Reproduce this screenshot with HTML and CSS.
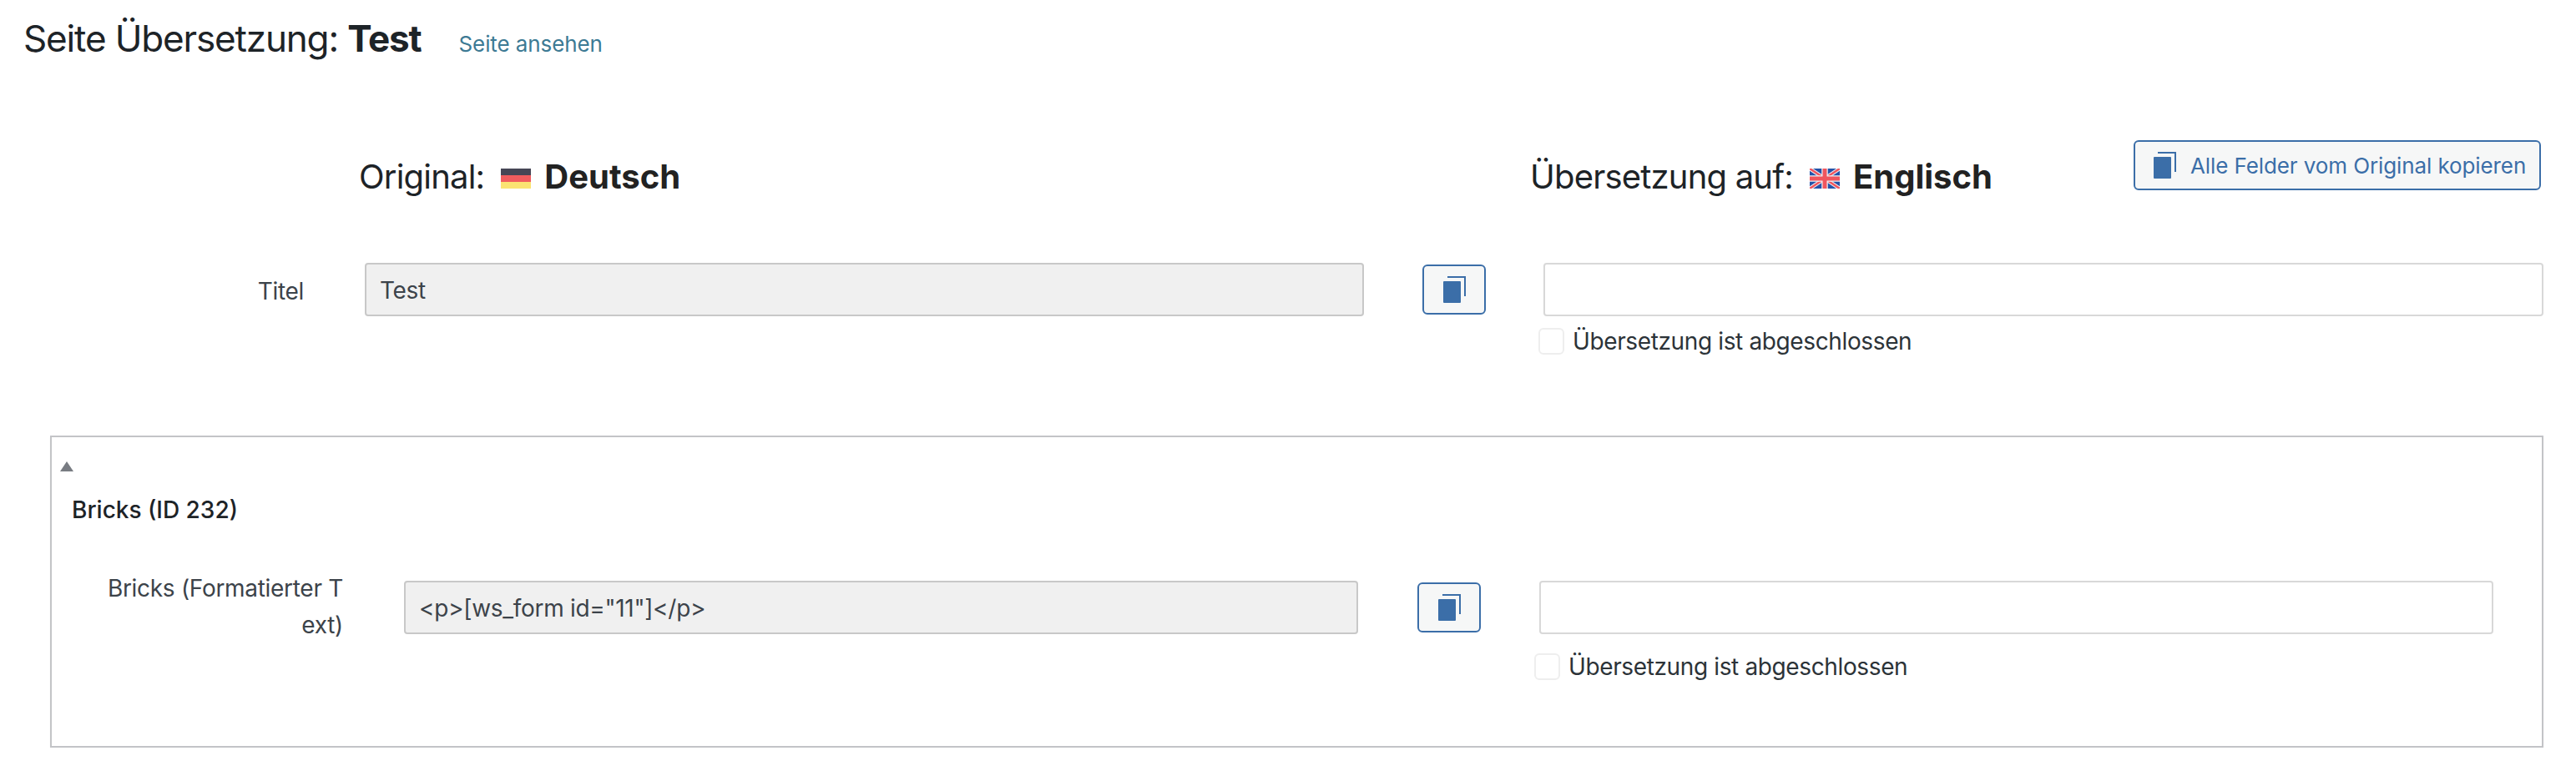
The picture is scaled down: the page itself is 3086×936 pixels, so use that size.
FILE: index.html
```html
<!DOCTYPE html>
<html lang="de">
<head>
    <meta charset="UTF-8">
    <meta name="viewport" content="width=device-width, initial-scale=1.0">
    <title>Seite Übersetzung: Test</title>
    <link rel="stylesheet" href="styles.css">
</head>
<body>
    <div class="page">
        <!-- Page title -->
        <div class="page-title">
            <h1>Seite Übersetzung: <strong>Test</strong></h1>
            <a class="view-link" href="#">Seite ansehen</a>
        </div>

        <!-- Language headings -->
        <div class="lang-row">
            <h2 class="lang-heading lang-original">
                Original:
                <svg class="flag" viewBox="0 0 36 24"><rect width="36" height="8" fill="#464655"/><rect y="8" width="36" height="8" fill="#f05c5e"/><rect y="16" width="36" height="8" fill="#fbe372"/></svg>
                <strong>Deutsch</strong>
            </h2>
            <h2 class="lang-heading lang-target">
                Übersetzung auf:
                <svg class="flag" viewBox="0 0 36 24"><rect width="36" height="24" fill="#2453a8"/><path d="M0 0L36 24M36 0L0 24" stroke="#eef0f4" stroke-width="4.5"/><path d="M0 0L36 24M36 0L0 24" stroke="#f0565e" stroke-width="2.5"/><path d="M18 0V24M0 12H36" stroke="#eef0f4" stroke-width="7.5"/><path d="M18 0V24M0 12H36" stroke="#f0565e" stroke-width="5"/></svg>
                <strong>Englisch</strong>
            </h2>
            <button class="copy-btn copy-all">
                <svg class="copy-icon" viewBox="0 0 27 32"><rect y="6" width="21" height="26" rx="1" fill="#3b6ea8"/><path d="M5 1H26V24" fill="none" stroke="#3b6ea8" stroke-width="2"/></svg>
                Alle Felder vom Original kopieren
            </button>
        </div>

        <!-- Title field -->
        <div class="field-row">
            <label class="field-label">Titel</label>
            <input class="field-input field-source" type="text" value="Test" disabled>
            <button class="copy-btn copy-one">
                <svg class="copy-icon" viewBox="0 0 27 32"><rect y="6" width="21" height="26" rx="1" fill="#3b6ea8"/><path d="M5 1H26V24" fill="none" stroke="#3b6ea8" stroke-width="2"/></svg>
            </button>
            <div class="field-target">
                <input class="field-input" type="text">
                <label class="done-check"><input type="checkbox"> Übersetzung ist abgeschlossen</label>
            </div>
        </div>

        <!-- Bricks section -->
        <div class="section-box">
            <span class="toggle-arrow"></span>
            <h3 class="section-title">Bricks (ID 232)</h3>
            <div class="field-row section-row">
                <label class="field-label">Bricks (Formatierter T<br>ext)</label>
                <input class="field-input field-source" type="text" value='&lt;p&gt;[ws_form id="11"]&lt;/p&gt;' disabled>
                <button class="copy-btn copy-one">
                    <svg class="copy-icon" viewBox="0 0 27 32"><rect y="6" width="21" height="26" rx="1" fill="#3b6ea8"/><path d="M5 1H26V24" fill="none" stroke="#3b6ea8" stroke-width="2"/></svg>
                </button>
                <div class="field-target">
                    <input class="field-input" type="text">
                    <label class="done-check"><input type="checkbox"> Übersetzung ist abgeschlossen</label>
                </div>
            </div>
        </div>
    </div>
</body>
</html>
```

FILE: styles.css
```css
/* Base */
* {
    box-sizing: border-box;
}
body {
    margin: 0;
    background-color: #fff;
    color: #3c434a;
    font-family: Inter, "Liberation Sans", sans-serif;
    font-size: 28px;
    letter-spacing: -0.3px;
}
.page {
    padding: 0 39px 0 28px;
}

/* Page title */
.page-title {
    display: flex;
    align-items: baseline;
    height: 170px;
    padding-top: 17px;
}
.page-title h1 {
    margin: 0;
    color: #1d2327;
    font-size: 44px;
    font-weight: 400;
    letter-spacing: -1.15px;
    line-height: 58px;
}
.view-link {
    margin-left: 45px;
    color: #3d7a94;
    font-size: 26px;
    letter-spacing: -0.1px;
    text-decoration: none;
}

/* Language headings */
.lang-row {
    display: flex;
    align-items: flex-start;
    height: 145px;
}
.lang-heading {
    display: flex;
    align-items: center;
    margin: 17px 0 0;
    height: 50px;
    color: #1d2327;
    font-size: 40px;
    font-weight: 400;
    letter-spacing: -0.8px;
    line-height: 50px;
}
.lang-heading strong {
    color: #222;
    letter-spacing: 0;
}
.flag {
    width: 36px;
    height: 24px;
    margin: 4px 16px 0 20px;
}
.lang-original {
    width: 1403px;
    margin-left: 402px;
}
.lang-target {
    flex: 1;
}

/* Buttons */
.copy-btn {
    display: flex;
    align-items: center;
    justify-content: center;
    height: 60px;
    background-color: #f6f7f7;
    border: 2px solid #3b6ea8;
    border-radius: 6px;
    color: #3b6ea8;
    font-family: inherit;
    font-size: 26px;
    letter-spacing: -0.1px;
    cursor: pointer;
}
.copy-icon {
    width: 27px;
    height: 32px;
    flex-shrink: 0;
}
.copy-all {
    justify-content: flex-start;
    gap: 17px;
    width: 488px;
    margin: -2px 3px 0 0;
    padding: 0 0 0 22px;
}
.copy-one {
    width: 76px;
    margin: 2px 69px 0 70px;
    padding: 0;
}

/* Fields */
.field-row {
    display: flex;
    align-items: flex-start;
}
.field-label {
    width: 336px;
    margin-right: 73px;
    padding-top: 12px;
    text-align: right;
    line-height: 44px;
}
.field-input {
    height: 64px;
    padding: 2px 16px 0;
    background-color: #fff;
    border: 2px solid #d8d8d8;
    border-radius: 4px;
    color: #3c434a;
    font-family: inherit;
    font-size: 28px;
    letter-spacing: -0.3px;
    outline: none;
}
.field-source {
    width: 1197px;
    background-color: #f0f0f0;
    border-color: #c8c8c8;
    opacity: 1;
}
.field-target {
    flex: 1;
}
.field-target .field-input {
    width: 100%;
}
.done-check {
    display: flex;
    align-items: center;
    gap: 10px;
    height: 32px;
    margin: 14px 0 0 -6px;
    color: #2c3338;
    letter-spacing: -0.37px;
    line-height: 32px;
}
.done-check input {
    appearance: none;
    width: 31px;
    height: 32px;
    margin: 0;
    background-color: #fff;
    border: 2px solid #eeeeee;
    border-radius: 6px;
}

/* Bricks section */
.section-box {
    height: 374px;
    margin: 97px 0 0 32px;
    padding: 29px 58px 0 10px;
    border: 2px solid #c3c4c7;
    box-shadow: 0 2px 2px rgba(0,0,0,0.04);
}
.toggle-arrow {
    display: block;
    width: 0;
    height: 0;
    border-left: 8px solid transparent;
    border-right: 8px solid transparent;
    border-bottom: 12px solid #787c82;
}
.section-title {
    margin: 24px 0 0 14px;
    color: #1d2327;
    font-size: 28px;
    font-weight: 500;
    letter-spacing: 0;
    line-height: 44px;
}
.section-row {
    margin-top: 63px;
}
.section-row .field-label {
    width: 339px;
    margin-top: -13px;
    padding-top: 0;
}
.section-row .field-source {
    width: 1143px;
}
.section-row .copy-one {
    margin: 2px 70px 0 71px;
}
.section-row .done-check {
    margin-top: 23px;
}
```
